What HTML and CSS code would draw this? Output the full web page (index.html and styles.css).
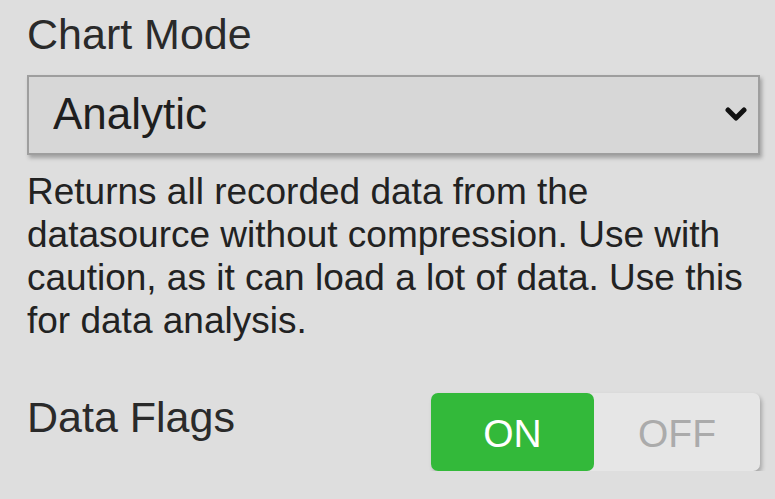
FILE: index.html
```html
<!DOCTYPE html>
<html lang="en">
<head>
    <meta charset="UTF-8">
    <meta name="viewport" content="width=device-width, initial-scale=1.0">
    <title>Chart Settings</title>
    <link rel="stylesheet" href="styles.css">
</head>
<body>
    <div class="panel">
        <label class="field-label" for="chartMode">Chart Mode</label>
        <div class="select-wrap">
            <select id="chartMode" class="mode-select">
                <option selected>Analytic</option>
                <option>Aggregated</option>
                <option>Raw</option>
            </select>
            <svg class="chevron" width="22" height="14" viewBox="0 0 22 14">
                <path d="M3 3 L11 11 L19 3" fill="none" stroke="#111" stroke-width="5" stroke-linecap="round" stroke-linejoin="round"/>
            </svg>
        </div>
        <p class="help-text">Returns all recorded data from the datasource without compression. Use with caution, as it can load a lot of data. Use this for data analysis.</p>

        <div class="flag-row">
            <span class="field-label">Data Flags</span>
            <div class="toggle">
                <button class="toggle-btn active">ON</button>
                <button class="toggle-btn">OFF</button>
            </div>
        </div>
    </div>
</body>
</html>
```

FILE: styles.css
```css
body {
    margin: 0;
    background-color: #dedede;
    font-family: "Liberation Sans", Arial, sans-serif;
    color: #222;
}
.panel {
    padding: 10px 15px 0 27px;
}
.field-label {
    display: block;
    font-size: 43px;
    line-height: 49px;
    color: #2a2a2a;
}
.select-wrap {
    position: relative;
    margin-top: 16px;
}
.mode-select {
    -webkit-appearance: none;
    appearance: none;
    display: block;
    width: 100%;
    height: 80px;
    margin: 0;
    padding: 0 0 4px 24px;
    border: 2px solid #9e9e9e;
    border-radius: 0;
    background-color: #d7d7d7;
    box-shadow: 2px 3px 4px rgba(0, 0, 0, 0.28);
    font-family: inherit;
    font-size: 44px;
    color: #1e1e1e;
    outline: none;
}
.chevron {
    position: absolute;
    right: 13px;
    top: 32px;
    pointer-events: none;
}
.help-text {
    margin: 15px 0 0;
    font-size: 37px;
    line-height: 43px;
    color: #222;
}
.flag-row {
    display: flex;
    align-items: center;
    justify-content: space-between;
    margin-top: 51px;
}
.flag-row .field-label {
    margin-top: -29px;
}
.toggle {
    display: flex;
    width: 329px;
    height: 78px;
    border-radius: 7px;
    background-color: #e6e6e6;
    box-shadow: 2px 3px 4px rgba(0, 0, 0, 0.25);
}
.toggle-btn {
    flex: 1;
    border: none;
    background: none;
    font-family: inherit;
    font-size: 39px;
    color: #ababab;
    padding: 4px 0 0;
    cursor: pointer;
}
.toggle-btn.active {
    flex: 0 0 163px;
    background-color: #33b93a;
    color: #fff;
    border-radius: 7px;
}
```
